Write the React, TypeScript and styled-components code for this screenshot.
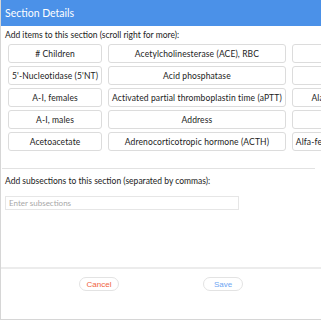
import React from "react";
import styled, { createGlobalStyle } from "styled-components";

const GlobalStyle = createGlobalStyle`
  html, body { margin: 0; padding: 0; background: #fff; }
  body { font-family: "Lato", "Noto Sans", sans-serif; }
  * { box-sizing: border-box; }
`;

const Modal = styled.div`
  width: 321px;
  height: 320px;
  border-left: 1px solid #d6d6d6;
  border-bottom: 1px solid #d6d6d6;
  display: flex;
  flex-direction: column;
  overflow: hidden;
  background: #fff;
`;

const Header = styled.div`
  height: 26px;
  flex: none;
  background: #4b91e8;
  color: #fff;
  font-size: 10.5px;
  padding-left: 4px;
  display: flex;
  align-items: center;
`;

const Label = styled.div`
  font-size: 8.5px;
  color: #222;
  padding-left: 4px;
  line-height: 12px;
`;

const ItemsLabel = styled(Label)`
  margin-top: 3px;
`;

const Scroller = styled.div`
  margin: 3px 0 0 7px;
  overflow: hidden;
  height: 124px;
  flex: none;
`;

const Grid = styled.div`
  display: grid;
  grid-template-rows: repeat(5, 19px);
  grid-auto-flow: column;
  grid-auto-columns: max-content;
  column-gap: 6px;
  row-gap: 3px;
`;

const Item = styled.button`
  font-family: inherit;
  font-size: 8.5px;
  letter-spacing: 0.12px;
  color: #222;
  background: #fff;
  border: 1px solid #dcdcdc;
  border-radius: 3px;
  padding: 0 3px;
  min-width: 94px;
  height: 19px;
  text-align: center;
  white-space: nowrap;
`;

const Divider = styled.div`
  height: 1px;
  background: #e2e2e2;
  margin: 0 6px 0 1px;
  flex: none;
`;

const SubLabel = styled(Label)`
  margin-top: 6px;
`;

const SubInput = styled.input`
  margin: 9px 0 0 4px;
  width: 234px;
  height: 14px;
  border: 1px solid #e6e6e6;
  font-family: inherit;
  font-size: 8px;
  padding: 0 3px;
  outline: none;
  &::placeholder { color: #a8a8a8; }
`;

const Footer = styled.div`
  margin-top: auto;
  border-top: 2px solid #ececec;
  height: 52px;
  flex: none;
  display: flex;
  justify-content: center;
  align-items: flex-start;
  gap: 84px;
  padding: 8px 0 0 0;
`;

const PillButton = styled.button<{ $tone: "danger" | "primary" }>`
  width: 40px;
  height: 14px;
  border-radius: 7px;
  border: 1px solid #e3e3e3;
  background: #fff;
  font-family: "Liberation Sans", Arial, sans-serif;
  font-size: 8px;
  padding: 0;
  color: ${(p) => (p.$tone === "danger" ? "#f0623d" : "#6ea6f2")};
`;

const items = [
  "# Children",
  "5'-Nucleotidase (5'NT)",
  "A-I, females",
  "A-I, males",
  "Acetoacetate",
  "Acetylcholinesterase (ACE), RBC",
  "Acid phosphatase",
  "Activated partial thromboplastin time (aPTT)",
  "Address",
  "Adrenocorticotropic hormone (ACTH)",
  "Albumin",
  "Aldolase",
  "Alanine transaminase",
  "Aldosterone",
  "Alfa-fetoprotein (AFP), serum",
];

export default function App() {
  return (
    <>
      <GlobalStyle />
      <Modal>
        <Header>Section Details</Header>
        <ItemsLabel>Add items to this section (scroll right for more):</ItemsLabel>
        <Scroller>
          <Grid>
            {items.map((t) => (
              <Item key={t}>{t}</Item>
            ))}
          </Grid>
        </Scroller>
        <Divider />
        <SubLabel>Add subsections to this section (separated by commas):</SubLabel>
        <SubInput placeholder="Enter subsections" />
        <Footer>
          <PillButton $tone="danger">Cancel</PillButton>
          <PillButton $tone="primary">Save</PillButton>
        </Footer>
      </Modal>
    </>
  );
}
